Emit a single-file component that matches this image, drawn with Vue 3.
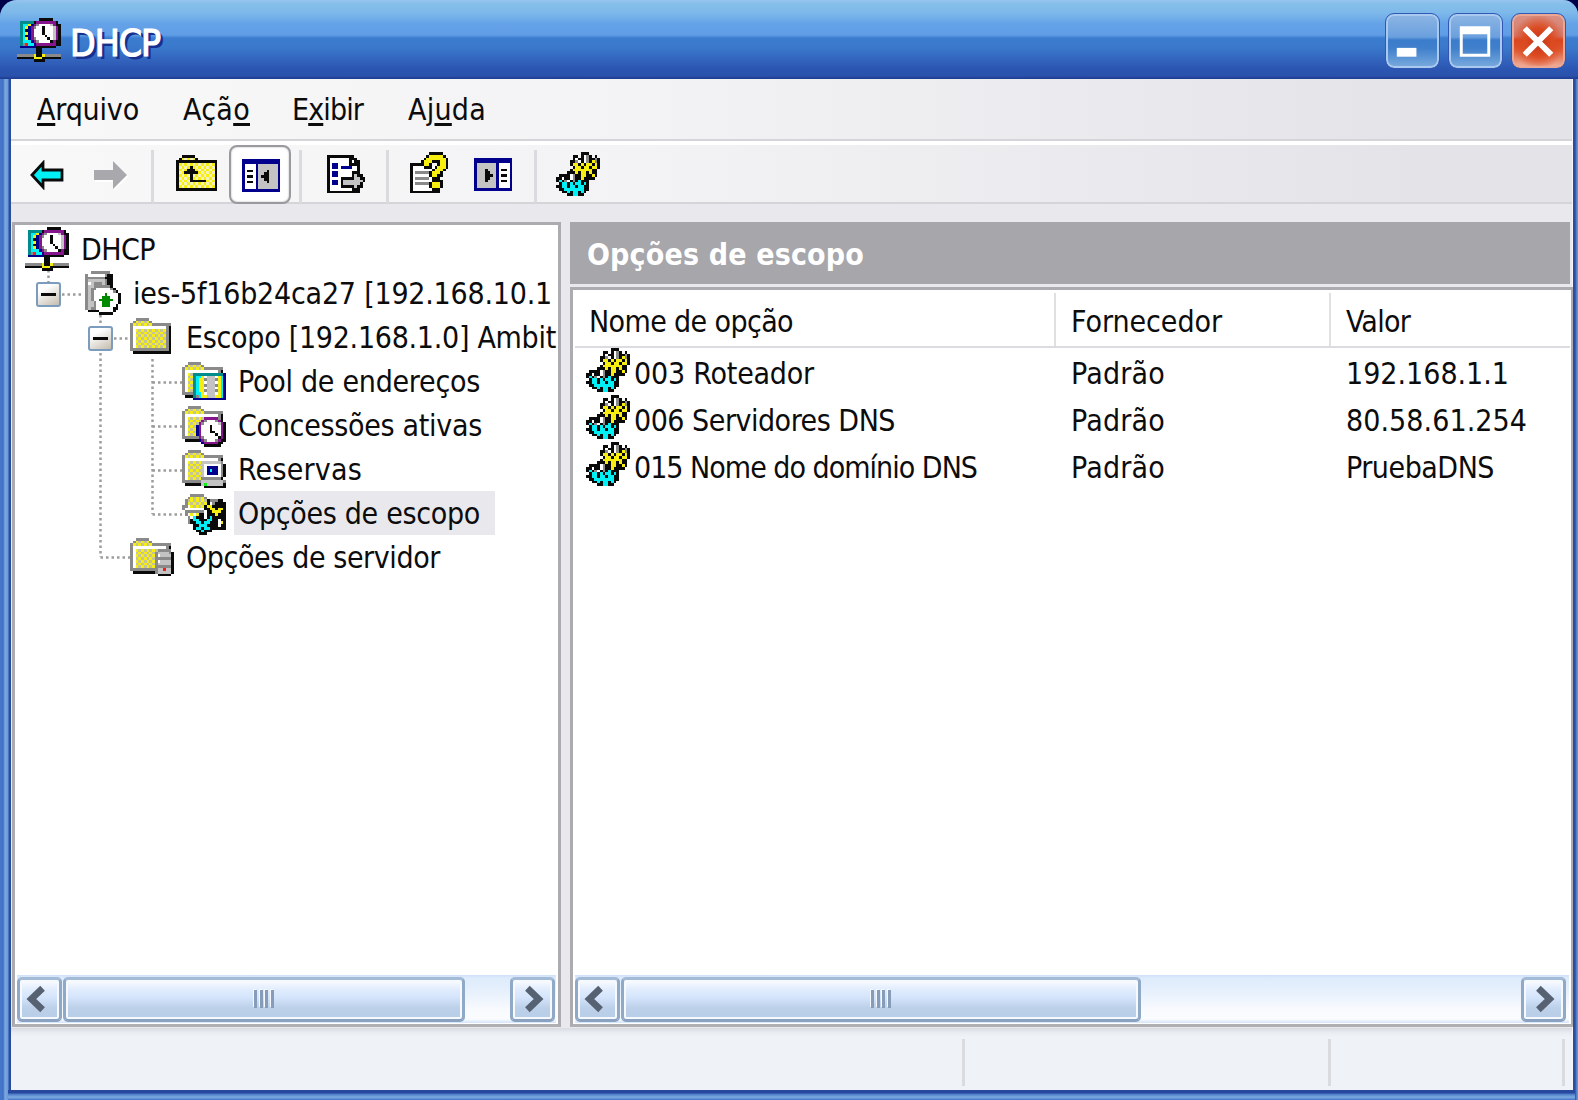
<script setup>
import { h } from 'vue'

const palette = {
  k: '#0a0a0a', w: '#ffffff', c: '#00f0f5', y: '#f6ee10', g: '#8a8a8a', s: '#c3c3c3',
  t: '#008c8c', n: '#00008c', p: '#86148c', e: '#008a00', r: '#f02020', l: '#10f020',
  f: '#f4f2b8', d: '#c6c49a'
}
const clock = [
  '...ppppp...', '..pgwwwgpk.', '.pgwwwwwspk', 'npwwwkwwwpk', 'npwwwkwwwpk', 'npwwwkkwwpk',
  'npwwwwwkwpk', '.pgwwwwwkpk', '.npgwwwgpkk', '..npppppkk.', '...kkkkkk..'
]
const folder = [
  '', '..ggggg', '.gydydyg', 'gydydydyggggggg', 'gwwwwwwwwwwwwgk',
  'gwydydydydydygk', 'gwdydydydydydgk', 'gwydydydydydygk', 'gwdydydydydydgk', 'gwydydydydydygk',
  'gwdydydydydydgk', 'gwydydydydydygk', 'ggggggggggggggk', '.kkkkkkkkkkkkkk'
]
const panel = [
  'nnnnnnnnnnnnnn', 'nnnnnnnnnnnnnn', 'nwwwwnsssssssn', 'nwwwwnsssssssn', 'nwkkwnsssksssn',
  'nwwwwnsskksssn', 'nwkkwnskkksssn', 'nwwwwnsskksssn', 'nwkkwnsssksssn', 'nwwwwnsssssssn',
  'nwwwwnsssssssn', 'nnnnnnnnnnnnnn'
]
// Each icon is a list of layers: [column, row, pixel rows]
const icons = {
  dhcp: [[0, 0, [
    '........kkkkk...', '.tttttkpppppppk.', '.tccynpgwwwwspkk', '.tcynpgwwkwwwspk',
    '.tcknpwwwkwwwspk', '.tcynpwwwkwwwspk', '.tcknpwwwwkwwspk', '.tcynpgwwwwkwspk',
    '.tcccnpgwwwwkpkk', '.tgrccnpppppppkk', '.nnnnnnkkkkkkk..', '.......kk.......',
    '.......kk.......', 'ggggggykkygggggg', 'kkkkkkyyykkkkkkk', '......kkkk......'
  ]]],
  server: [[0, 0, [
    '.....ggggggg....', '...gwwwwwwgkk...', '...gggggggkkk...', '...gssssssgkk...',
    '...gwsgggsgkk...', '...gssggggggk...', '...gsggwwwwwgk..', '...gsgwwwwwwwgk.',
    '...gsgwwwwewwwwk', '...gsgwwweeewwwk', '...gsgwweeeeewwk', '...gssgwweeewwwk',
    '...gssgwweeewwk.', '...gsggwwwwwwkk.', '....kkkkwwwwwk..', '........kkkkk...'
  ]]],
  folder: [[0, 0, folder]],
  pool: [[0, 0, folder], [4, 5, [
    'tttttttttttn', 'tccywssswycn', 'tcyygsssgycn', 'tcyywssswycn', 'tcyygsssgycn',
    'tcyywssswycn', 'tcyygsssgycn', 'tccywssswycn', 'tgcyysssyycn', 'nnnnnnnnnnnn'
  ]]],
  leases: [[0, 0, folder], [5, 5, clock]],
  reservations: [[0, 0, folder], [7, 5, [
    'sssssssg.', 'swwwwwwgk', 'swnnnnwgk', 'swncnnwgk', 'swnnnnwgk', 'swwwwwwgk',
    'gggggggk.', 'ssssssssg', 'slssssssk', '.kkkkkkkk'
  ]]],
  serverOptions: [[0, 0, folder], [9, 5, [
    '.ggggg.', 'gssssgk', 'gwssssk', 'ggggggk', 'gwssssk', 'gsssssk', 'ggggggk', 'gssrssk',
    'gsssssk', '.kkkkk.'
  ]]],
  scopeOptions: [[0, 0, [
    '', '...ggggg', '..gydydyg', '.gdydydydkgggkk', '.gydydydykwgkkkk', 'ggwydydykyykkkkk',
    'gwwwwwwwkkyykyyk', '.gggggggwkkyyykk', '.gwywykkwkkkykkk', '..gwckkkwkckkkkk',
    '..gkcckkkcckkwkk', '..gkkcckcckkkwyk', '...wkkccckkkkwkk', '....kcckcckkkkkk',
    '.....kkckkk', '......kkk'
  ]]],
  gears: [[0, 0, [
    '.........kkk....', '......kk.kwgk.k.', '......kwkkwgkkgk', '.....kkgwkwgkygk',
    '.....kyykykyykyk', '......kyykyykyyk', '.....kyyyyyyykk.', '....kkkykyykykk.',
    '.kkkkwgkkyykkyk.', 'kkwkkwgkkykkkk..', 'kckgwkgkckkk....', '.kcckckcckck....',
    'kkcckcckcckk....', '.kkccccccckk....', '..kkckcckck.....', '....kkcckk......'
  ]]],
  up: [[0, 1, [
    '..kkkkk', '.kyfyfyk', 'kkkkkkkkkkkkkkk', 'kyfyfyfyfyfyfyk', 'kfyfyfyfyfyfyfk', 'kyfyfyfyfyfyfyk',
    'kfyfyfyfyfyfyfk', 'kyfyfyfyfyfyfyk', 'kfyfyfyfyfyfyfk', 'kyfyfyfyfyfyfyk', 'kfyfyfyfyfyfyfk',
    'kyfyfyfyfyfyfyk', 'kkkkkkkkkkkkkkk'
  ]], [3, 5, ['..k', '.kkk', 'kkkkk', '..k', '..k', '..kkkkkk']]],
  panelLeft: [[1, 2, panel]],
  panelRight: [[1, 2, panel.map(r => [...r].reverse().join(''))]],
  exportList: [[1, 1, [
    'kkkkkkkkkk', 'kwwwwwwwkkk', 'kwwwwwwwkwkk', 'kwnnwwwwkkkk', 'kwnnwnnnnwwk', 'kwwwwwwwwwwk',
    'kwnnwwwwwkkk', 'kwnnwwwwwkskk', 'kwwwwkkkkksskk', 'kwnnwksssssssk', 'kwnnwkssssssk',
    'kwwwwkkkkkskk', 'kwwwwwwwwkkk', 'kkkkkkkkkkkk'
  ]]],
  help: [[1, 0, [
    '.......kkkkk', '......kyyyyyk', '.....kyyyyyyyk', '....kyyykkkyyk', 'kkkkkyyk..kyyk', 'kwwwwkkkwkyyyk',
    'kwwwwwwwkyyyk', 'kwgggggkyyyk', 'kwwwwwwkyykk', 'kwgggggwkkk', 'kwwwwwwwkkkk', 'kwgggggkyyyk',
    'kwwwwwwkyyyk', 'kwwwwwwwkkk', 'kkkkkkkkkkk'
  ]]]
}

const PixelIcon = props => h('svg', {
  viewBox: '0 0 16 16', width: 44, height: 44, 'shape-rendering': 'crispEdges', style: { flex: 'none', display: 'block' }
}, icons[props.name].flatMap(([cx, cy, rows]) => rows.flatMap((row, y) =>
  [...row.matchAll(/([a-z])\1*/g)].map(m => h('rect', {
    x: cx + m.index, y: cy + y, width: m[0].length, height: 1, fill: palette[m[1]]
  })))))
PixelIcon.props = ['name']

// Tracks a label so that it spans the given width
const vFit = {
  mounted(el, { value }) {
    const natural = el.getBoundingClientRect().width
    el.style.letterSpacing = (value - natural) / el.textContent.length + 'px'
  }
}

const menus = [
  { pre: '', key: 'A', post: 'rquivo', w: 102 },
  { pre: 'Açã', key: 'o', post: '', w: 67 },
  { pre: 'E', key: 'x', post: 'ibir', w: 71 },
  { pre: 'Aj', key: 'u', post: 'da', w: 78 }
]
const tree = [
  { icon: 'dhcp', text: 'DHCP', level: 0, w: 74 },
  { icon: 'server', text: 'ies-5f16b24ca27 [192.168.10.1', level: 1, w: 419 },
  { icon: 'folder', text: 'Escopo [192.168.1.0] Ambit', level: 2, w: 370 },
  { icon: 'pool', text: 'Pool de endereços', level: 3, w: 242 },
  { icon: 'leases', text: 'Concessões ativas', level: 3, w: 244 },
  { icon: 'reservations', text: 'Reservas', level: 3, w: 124 },
  { icon: 'scopeOptions', text: 'Opções de escopo', level: 3, w: 242, selected: true },
  { icon: 'serverOptions', text: 'Opções de servidor', level: 2, w: 254 }
]
const rows = [
  { name: '003 Roteador', w: 180, value: '192.168.1.1', vw: 163 },
  { name: '006 Servidores DNS', w: 261, value: '80.58.61.254', vw: 181 },
  { name: '015 Nome do domínio DNS', w: 343, value: 'PruebaDNS', vw: 148 }
]
const guides = [
  'M33.5 45V57', 'M47 69.5H66', 'M85.5 90V102', 'M99 113.5H117', 'M85.5 128V332', 'M85.5 332.5H117',
  'M137.5 134V289', 'M137.5 157.5H167', 'M137.5 201.5H167', 'M137.5 245.5H167', 'M137.5 289.5H167'
]
</script>

<template>
  <div class="desktop">
    <div class="window">
      <header class="titlebar">
        <PixelIcon name="dhcp" />
        <div class="title"><span v-fit="90">DHCP</span></div>
        <div class="controls">
          <button class="ctl"><svg viewBox="0 0 54 54"><path d="M11 34h20v9H11z" fill="#fff" /></svg></button>
          <button class="ctl"><svg viewBox="0 0 54 54"><path d="M11 12h31v31H11zM14 20v20h25V20z" fill="#fff" fill-rule="evenodd" /></svg></button>
          <button class="ctl close"><svg viewBox="0 0 54 54"><path d="M13 14L40 41M40 14L13 41" stroke="#fff" stroke-width="6" /></svg></button>
        </div>
      </header>

      <main class="client">
        <nav class="menu">
          <span v-for="m in menus" :key="m.key" class="menu-item"><span v-fit="m.w">{{ m.pre }}<u>{{ m.key }}</u>{{ m.post }}</span></span>
        </nav>

        <div class="toolbar">
          <svg class="arrow" width="34" height="30" viewBox="0 0 34 30"><path d="M2 15L13 3V10H32V20H13V27Z" fill="#00f0f5" stroke="#0a0a0a" stroke-width="2.8" /></svg>
          <svg class="arrow fwd" width="34" height="30" viewBox="0 0 34 30"><path d="M1 10H20V1L34 15L20 29V20H1Z" fill="#a9a8ad" /></svg>
          <i class="sep s1"></i>
          <PixelIcon name="up" class="up" />
          <button class="toggled"><PixelIcon name="panelLeft" /></button>
          <i class="sep s2"></i>
          <PixelIcon name="exportList" class="exp" />
          <i class="sep s3"></i>
          <PixelIcon name="help" class="help" />
          <PixelIcon name="panelRight" class="pan" />
          <i class="sep s4"></i>
          <PixelIcon name="gears" class="gears" />
        </div>

        <div class="panes">
          <section class="box tree">
            <svg class="guides" width="200" height="350"><path v-for="g in guides" :key="g" :d="g" /></svg>
            <div class="nodes">
              <div v-for="n in tree" :key="n.text" class="node" :class="['l' + n.level, { selected: n.selected }]">
                <PixelIcon :name="n.icon" />
                <div class="label"><span v-fit="n.w">{{ n.text }}</span></div>
              </div>
            </div>
            <div class="expander e1"></div>
            <div class="expander e2"></div>
            <div class="scroll">
              <button class="sbtn"><svg viewBox="0 0 44 44"><path d="M25 11L14 21.500L25 32" /></svg></button>
              <div class="thumb t1"><i></i><i></i><i></i><i></i></div>
              <button class="sbtn end"><svg viewBox="0 0 44 44"><path d="M17 11L28 21.500L17 32" /></svg></button>
            </div>
          </section>

          <section class="details">
            <h2><span v-fit="277">Opções de escopo</span></h2>
            <div class="box list">
              <div class="cols head">
                <div><span v-fit="204">Nome de opção</span></div>
                <div><span v-fit="151">Fornecedor</span></div>
                <div><span v-fit="64">Valor</span></div>
              </div>
              <div v-for="r in rows" :key="r.name" class="cols row">
                <div><PixelIcon name="gears" /><span v-fit="r.w">{{ r.name }}</span></div>
                <div><span v-fit="94">Padrão</span></div>
                <div><span v-fit="r.vw">{{ r.value }}</span></div>
              </div>
              <div class="scroll">
                <button class="sbtn"><svg viewBox="0 0 44 44"><path d="M25 11L14 21.500L25 32" /></svg></button>
                <div class="thumb t2"><i></i><i></i><i></i><i></i></div>
                <button class="sbtn end"><svg viewBox="0 0 44 44"><path d="M17 11L28 21.500L17 32" /></svg></button>
              </div>
            </div>
          </section>
        </div>

        <footer class="status"><i></i><i></i><i></i></footer>
      </main>
    </div>
  </div>
</template>

<style>
html, body { margin: 0; overflow: hidden; background: #00004a; }
</style>

<style scoped>
* { box-sizing: border-box; }
button { padding: 0; margin: 0; border: 0; background: none; font: inherit; }
.desktop { width: 1578px; height: 1100px; background: #00004a; font: 30px/44px "DejaVu Sans Condensed", "DejaVu Sans", sans-serif; font-stretch: condensed; color: #0c0c0c; white-space: nowrap; }
.desktop span { display: inline-block; }
.window {
  width: 1578px; height: 1100px; display: flex; flex-direction: column; overflow: hidden;
  border-radius: 17px 15px 0 0; padding: 0 5px 10px 11px;
  background: linear-gradient(90deg, #4476c9 0 2px, #3f6cc0 3px, #7ba9df 5px, #6a9ad8 8px, #2a4da0 9px 11px, #2a4da0 1573px, #2a4da0 1575px, #5f92d6 1577px);
  position: relative;
}
.window::after {
  content: ''; position: absolute; left: 8px; right: 3px; bottom: 0; height: 10px;
  background: linear-gradient(#27489c 0 3px, #4a78c6 4px, #7ba9df 7px, #6f9fda 8px, #3f6fc4 10px);
}
.titlebar {
  flex: none; height: 79px; margin: 0 -5px 0 -11px; padding: 0 13px 0 17px; display: flex; align-items: flex-start;
  background: linear-gradient(#97c4ee 0, #84bfea 4px, #7db8ea 13px, #64a2e8 24px, #609de6 35px, #3c7dd0 38px, #3a78cb 48px, #3160bb 62px, #2a55b0 70px, #2a52ad 76px, #1f3f95 78px);
}
.titlebar > svg { margin-top: 18px; }
.title { margin: 20px 0 0 9px; font-size: 37px; line-height: 48px; color: #fff; -webkit-text-stroke: 1.2px #fff; text-shadow: 3px 3px 0 #16308e; }
.controls { margin: 14px 0 0 auto; display: flex; gap: 10px; }
.ctl {
  width: 53px; height: 54px; border: 2px solid #a9caee; border-radius: 8px; outline: 1px solid #3058b4;
  background: linear-gradient(#8ab4e3, #6ba0de 21px, #3b7ccc 24px, #3f7fcb 32px, #76a8dd);
}
.ctl svg { display: block; width: 53px; height: 54px; margin: -2px; }
.close { border-color: #eba793; background: radial-gradient(ellipse at 50% 52%, #c8391a 10%, #dc4a20 38%, rgba(220, 74, 32, 0) 75%), linear-gradient(#d99083, #d5796a 20px, #d9431c 24px, #de5a34 34px, #efab96); }

.client { flex: 1; min-height: 0; display: flex; flex-direction: column; background: #e9e8ed; border-right: 1px solid #f6f6fa; }
.menu {
  flex: none; height: 62px; padding: 9px 0 0 26px; display: flex; border-bottom: 2px solid #d5d4d9;
  background: linear-gradient(90deg, #f8f8f8, #f3f3f5 40%, #e4e3e8 90%);
}
.menu-item:nth-child(1) { width: 146px; }
.menu-item:nth-child(2) { width: 109px; }
.menu-item:nth-child(3) { width: 116px; }
.menu u { text-decoration-thickness: 3px; text-underline-offset: 3px; text-decoration-skip-ink: none; }
.toolbar {
  flex: none; height: 63px; display: flex; align-items: flex-start; padding-left: 19px; border-top: 4px solid #fff; border-bottom: 2px solid #d5d4d9;
  background: linear-gradient(90deg, #f8f8f8, #f3f3f5 40%, #e4e3e8 90%);
}
.toolbar > svg { margin-top: 7px; }
.toolbar > .arrow { margin-top: 15px; flex: none; }
.toolbar > .fwd { margin-left: 29px; filter: drop-shadow(1px 2px 0 #fff); }
.sep { flex: none; width: 3px; height: 53px; margin-top: 5px; background: #dbdadf; }
.s1 { margin-left: 24px; }
.up { margin-left: 22px; }
.toggled { flex: none; width: 62px; height: 59px; margin: 0 0 -2px 9px; padding: 0; display: flex; justify-content: center; align-items: flex-start; background: #fff; border: 2px solid #9a99a0; border-radius: 8px; box-shadow: inset 0 0 2px #aaa; }
.toggled svg { margin: 6px 0 0 2px; }
.s2 { margin-left: 8px; }
.exp { margin-left: 22px; }
.s3 { margin-left: 18px; }
.help { margin-left: 18px; }
.pan { margin-left: 20px; }
.s4 { margin-left: 19px; }
.gears { margin-left: 19px; }

.panes { flex: none; height: 824px; padding: 18px 0 0 1px; display: flex; gap: 9px; }
.box { position: relative; display: flex; flex-direction: column; background: #fff; border: 3px solid #acabaf; border-bottom-color: #b0b0b2; }
.tree { width: 549px; height: 805px; overflow: hidden; }
.guides { position: absolute; left: 0; top: 0; }
.guides path { fill: none; stroke: #9c9c9c; stroke-width: 2.5; stroke-dasharray: 2.5 3; }
.nodes { position: relative; padding-top: 2px; }
.node { display: flex; height: 44px; padding-left: 10px; }
.l1 { padding-left: 62px; }
.l2 { padding-left: 115px; }
.l3 { padding-left: 167px; }
.label { margin-left: 8px; padding: 0 15px 0 4px; height: 44px; line-height: 45px; }
.selected .label { background: #e9e8ed; }
.expander {
  position: absolute; width: 25px; height: 25px; border: 2px solid #7b9cbd; border-radius: 3px;
  background: linear-gradient(#0a0a0a, #0a0a0a) center / 15px 3px no-repeat, linear-gradient(150deg, #fff 25%, #c4bcae);
}
.e1 { left: 21px; top: 57px; }
.e2 { left: 73px; top: 101px; }
.scroll {
  margin: auto 2px 1px; height: 48px; display: flex; align-items: flex-end; padding-bottom: 1px;
  background: linear-gradient(#cfe0f8, #deebfc 3px, #e8f1fd 18px, #f8fafe 34px, #fbfcff 44px, #d3e4fa);
}
.sbtn, .thumb {
  height: 45px; flex: none; border: 3px solid #8fa9c6; border-top-color: #a4bbd8; border-bottom-color: #8aa2c0; border-radius: 5px; box-shadow: inset 0 0 0 2px #f6faff;
  background: linear-gradient(#fbfdff, #e2edfd 9px, #d5e5fc 17px, #bcd0e9 28px, #b8cde7);
}
.sbtn { width: 45px; }
.sbtn svg { display: block; width: 45px; height: 45px; margin: -3px; fill: none; stroke: #566172; stroke-width: 6.5; }
.end { margin-left: auto; margin-right: 1px; }
.thumb { display: flex; justify-content: center; gap: 2.5px; padding-top: 10px; margin-left: 1px; }
.thumb i { width: 3px; height: 18px; background: #879cb9; box-shadow: -1px -1px 0 #f4f8ff; }
.t1 { width: 402px; }
.t2 { width: 520px; }
.list .end { margin-right: 3px; }

.details { flex: 1; min-width: 0; display: flex; flex-direction: column; }
.details h2 { flex: none; margin: 0 2px 3px 0; height: 62px; padding-left: 17px; font-size: 30px; line-height: 65px; font-weight: bold; color: #fff; background: #a7a6ab; }
.list { height: 740px; border-right-width: 2px; margin-right: -1px; }
.cols { display: flex; }
.cols > div { display: flex; align-items: center; }
.cols > div:nth-child(1) { width: 481px; }
.cols > div:nth-child(2) { width: 275px; padding-left: 17px; }
.cols > div:nth-child(3) { padding-left: 17px; }
.head { flex: none; height: 58px; margin: 0 1px 0 2px; padding-top: 3px; border-bottom: 2px solid #dcdce0; }
.head > div { padding-top: 4px; }
.head > div:nth-child(1) { padding-left: 14px; }
.head > div:nth-child(n+2) { border-left: 2px solid #e0e0e3; }
.head > div:nth-child(1) { width: 479px; }
.head > div:nth-child(n+2) { padding-left: 15px; }
.row { flex: none; height: 47px; }
.row span { position: relative; top: 2px; }
.row svg { margin-top: -4px; }
.row > div:nth-child(1) { padding-left: 13px; gap: 4px; }

.status { flex: none; height: 63px; position: relative; display: flex; background: linear-gradient(#d8dce2, #eaedf2 5px, #eff2f7 9px); border-bottom: 1px solid #c9d2e6; padding: 11px 0 4px; }
.status i { width: 3px; height: 47px; background: #d9dbdf; }
.status i:nth-child(1) { margin-left: 951px; }
.status i:nth-child(2) { margin-left: 363px; }
.status i:nth-child(3) { margin-left: 231px; }
</style>
